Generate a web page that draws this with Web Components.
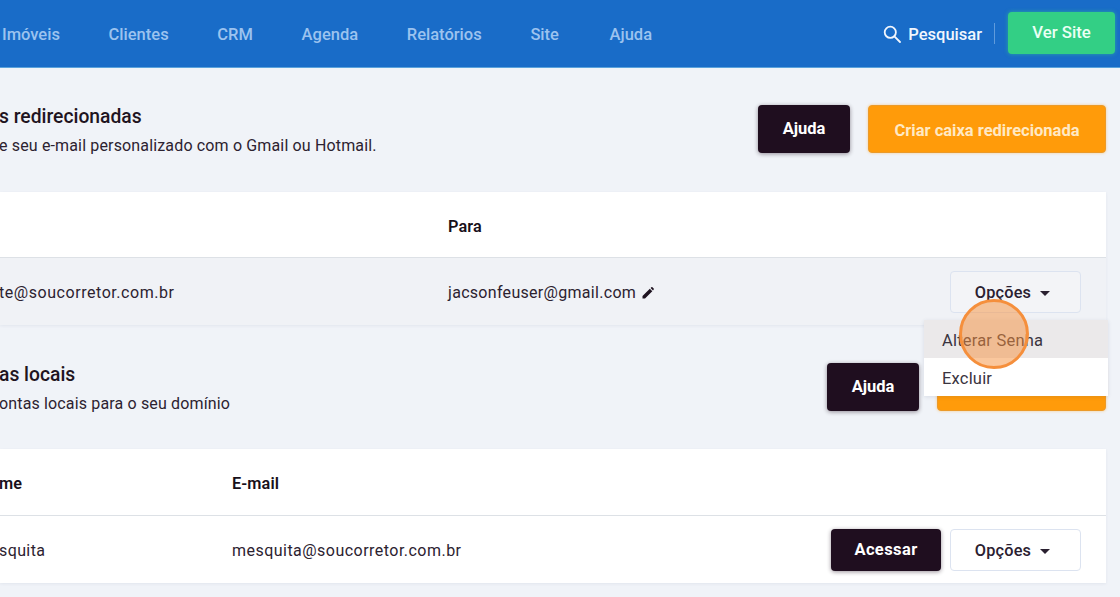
<!doctype html>
<html lang="pt-BR"><head><meta charset="utf-8"><title>Caixas</title>
<style>
html,body{margin:0;height:597px;overflow:hidden}
body{background:#f0f3f8;font-family:Roboto,"Liberation Sans",sans-serif;color:#1f1421;position:relative}
</style></head><body>
<app-header></app-header>
<main-area>
  <section-head pb="3" title="s redirecionadas" desc="e seu e-mail personalizado com o Gmail ou Hotmail.">
    <x-btn kind="dark" w="92">Ajuda</x-btn><x-btn kind="orange" w="238">Criar caixa redirecionada</x-btn>
  </section-head>
  <mail-card cols="448" h1="" h2="Para" hh="62" tint>
    <span slot="a" style="letter-spacing:.55px">te@soucorretor.com.br</span>
    <span slot="b" style="letter-spacing:.3px">jacsonfeuser@gmail.com <edit-icon></edit-icon></span>
    <options-btn slot="c" open></options-btn>
  </mail-card>
  <section-head pb="1" title="as locais" desc="ontas locais para o seu domínio">
    <x-btn kind="dark" w="92">Ajuda</x-btn><x-btn kind="orange" w="169"></x-btn>
  </section-head>
  <mail-card cols="232" h1="me" h2="E-mail" hh="63">
    <span slot="a">squita</span>
    <span slot="b" style="letter-spacing:.47px">mesquita@soucorretor.com.br</span>
    <x-btn slot="c" kind="dark" w="110" h="42">Acessar</x-btn>
    <options-btn slot="c"></options-btn>
  </mail-card>
</main-area>
<click-ring></click-ring>
<script>
const def=(n,html)=>customElements.define(n,class extends HTMLElement{
  connectedCallback(){
    if(this.shadowRoot)return;
    this.attachShadow({mode:'open'}).innerHTML=typeof html==='function'?html(this):html;
  }
});
def('app-header',`<style>
:host{display:flex;align-items:center;height:67px;background:#196cc8;border-bottom:1px solid #5aa3dc;padding-left:2px;padding-right:5px;font-weight:500;font-size:16.5px}
nav{display:flex;gap:48.7px;flex:1;color:#9cc3ef;padding-top:1px}
nav .w{margin-left:2px}
.s{display:flex;align-items:center;color:#f1f6fd;gap:7px;padding-top:1px}
svg{display:block}
.d{width:1px;height:21px;background:#5f9bdc;margin:0 13px 0 12px}
.v{width:107px;height:42px;background:#33cf85;border-radius:4px;color:#eafff4;display:flex;align-items:center;justify-content:center;padding-bottom:2px;box-sizing:border-box;box-shadow:0 0 4px rgba(51,207,133,.6);margin-top:-1px;font-size:16.8px}
</style><nav><span>Imóveis</span><span>Clientes</span><span>CRM</span><span>Agenda</span><span>Relatórios</span><span>Site</span><span class="w">Ajuda</span></nav>
<div class="s"><svg width="18" height="18" viewBox="0 0 18 18" fill="none" stroke="#f1f6fd" stroke-width="1.8"><circle cx="7.3" cy="7.3" r="5.6"/><path d="M11.4 11.4 17 17" stroke-linecap="round"/></svg><span>Pesquisar</span></div><div class="d"></div><div class="v">Ver Site</div>`);
def('main-area',`<style>:host{display:block;padding-right:14px}</style><slot></slot>`);
def('section-head',t=>`<style>
:host{display:flex;align-items:center;justify-content:space-between;height:124px;padding-bottom:${t.getAttribute('pb')}px;box-sizing:border-box;margin-left:-1px}
.t{padding-top:5px}
h2{margin:0 0 8px;font-size:19.3px;font-weight:500;line-height:22px;color:#1f1421}
p{margin:0;font-size:16px;line-height:20px;color:#2c2230;letter-spacing:.15px}
.b{display:flex;gap:18px}
</style><div class="t"><h2>${t.getAttribute('title')}</h2><p>${t.getAttribute('desc')}</p></div><div class="b"><slot></slot></div>`);
def('x-btn',t=>{
 const k=t.getAttribute('kind'),w=t.getAttribute('w'),h=t.getAttribute('h')||48;
 const c=k==='dark'?'background:#1f0e1f;color:#fff;box-shadow:0 1px 4px rgba(31,14,31,.45);padding-bottom:1px;':'background:#ff9b0a;color:#ffe9c4;border:1px solid #eb9a2a;box-shadow:0 0 3px rgba(255,155,10,.45);padding-top:4px;';
 return `<style>:host{display:flex;align-items:center;justify-content:center;box-sizing:border-box;width:${w}px;height:${h}px;border-radius:4px;font-size:16.5px;font-weight:700;${c}}</style><slot></slot>`});
def('mail-card',t=>`<style>
:host{display:block;background:#fff;box-shadow:0 1px 3px rgba(40,60,100,.07);font-size:16px;letter-spacing:.4px;color:#2c2230}
.r{display:grid;grid-template-columns:${t.getAttribute('cols')}px 1fr auto;align-items:center}
.h{border-bottom:1px solid #dde1e6;font-weight:600;color:#18101a;letter-spacing:.1px;padding-top:3px;height:${t.getAttribute('hh')}px;font-size:16.3px}
.d{height:67px;${t.hasAttribute('tint')?'background:#f0f2f6;':''}}
.a{margin-left:-1px}
.d span{padding-top:1px}
.c{display:flex;gap:9px;padding-right:25px}
</style><div class="r h"><span class="a">${t.getAttribute('h1')}</span><span>${t.getAttribute('h2')}</span></div>
<div class="r d"><span class="a"><slot name="a"></slot></span><span><slot name="b"></slot></span><div class="c"><slot name="c"></slot></div></div>`);
def('edit-icon',`<style>:host{display:inline-block;vertical-align:-1px;margin-left:2px}svg{display:block}</style><svg width="12" height="12" viewBox="0 0 12 12" fill="#1f1421"><path d="M0.5 11.5V9L7.8 1.7l2.5 2.5L3 11.5zM8.6 1 9.4.3c.3-.3.7-.3 1 0l1.3 1.3c.3.3.3.7 0 1L11 3.4z"/></svg>`);
def('options-btn',t=>`<style>
:host{display:flex;align-items:center;justify-content:center;gap:9px;position:relative;width:131px;height:42px;box-sizing:border-box;border:1px solid #dce3f0;border-radius:4px;padding:1px 6px 0 0;font-size:16.3px;font-weight:500;letter-spacing:.2px;color:#2a2030;background:${t.hasAttribute('open')?'#f3f4f7':'#fff'}}
i{width:0;height:0;border:5px solid transparent;border-top-color:#2a2030;border-bottom:0;margin-top:2px}
.m{position:absolute;right:-28px;top:48px;width:184px;background:#fff;font-weight:400;box-shadow:0 1px 4px rgba(40,60,100,.12);letter-spacing:.2px;font-size:16.5px;color:#3a3440;z-index:2}
.m div{height:38px;display:flex;align-items:center;padding:4px 0 0 18px;box-sizing:border-box}
.m .o{background:#ebe9ea}
</style><span>Opções</span><i></i>${t.hasAttribute('open')?'<div class="m"><div class="o">Alterar Senha</div><div>Excluir</div></div>':''}`);
def('click-ring',`<style>:host{position:absolute;left:959px;top:299px;width:70px;height:70px;box-sizing:border-box;border-radius:50%;border:3px solid #f58f3c;background:rgba(245,143,60,.5);z-index:5}</style>`);
</script></body></html>
